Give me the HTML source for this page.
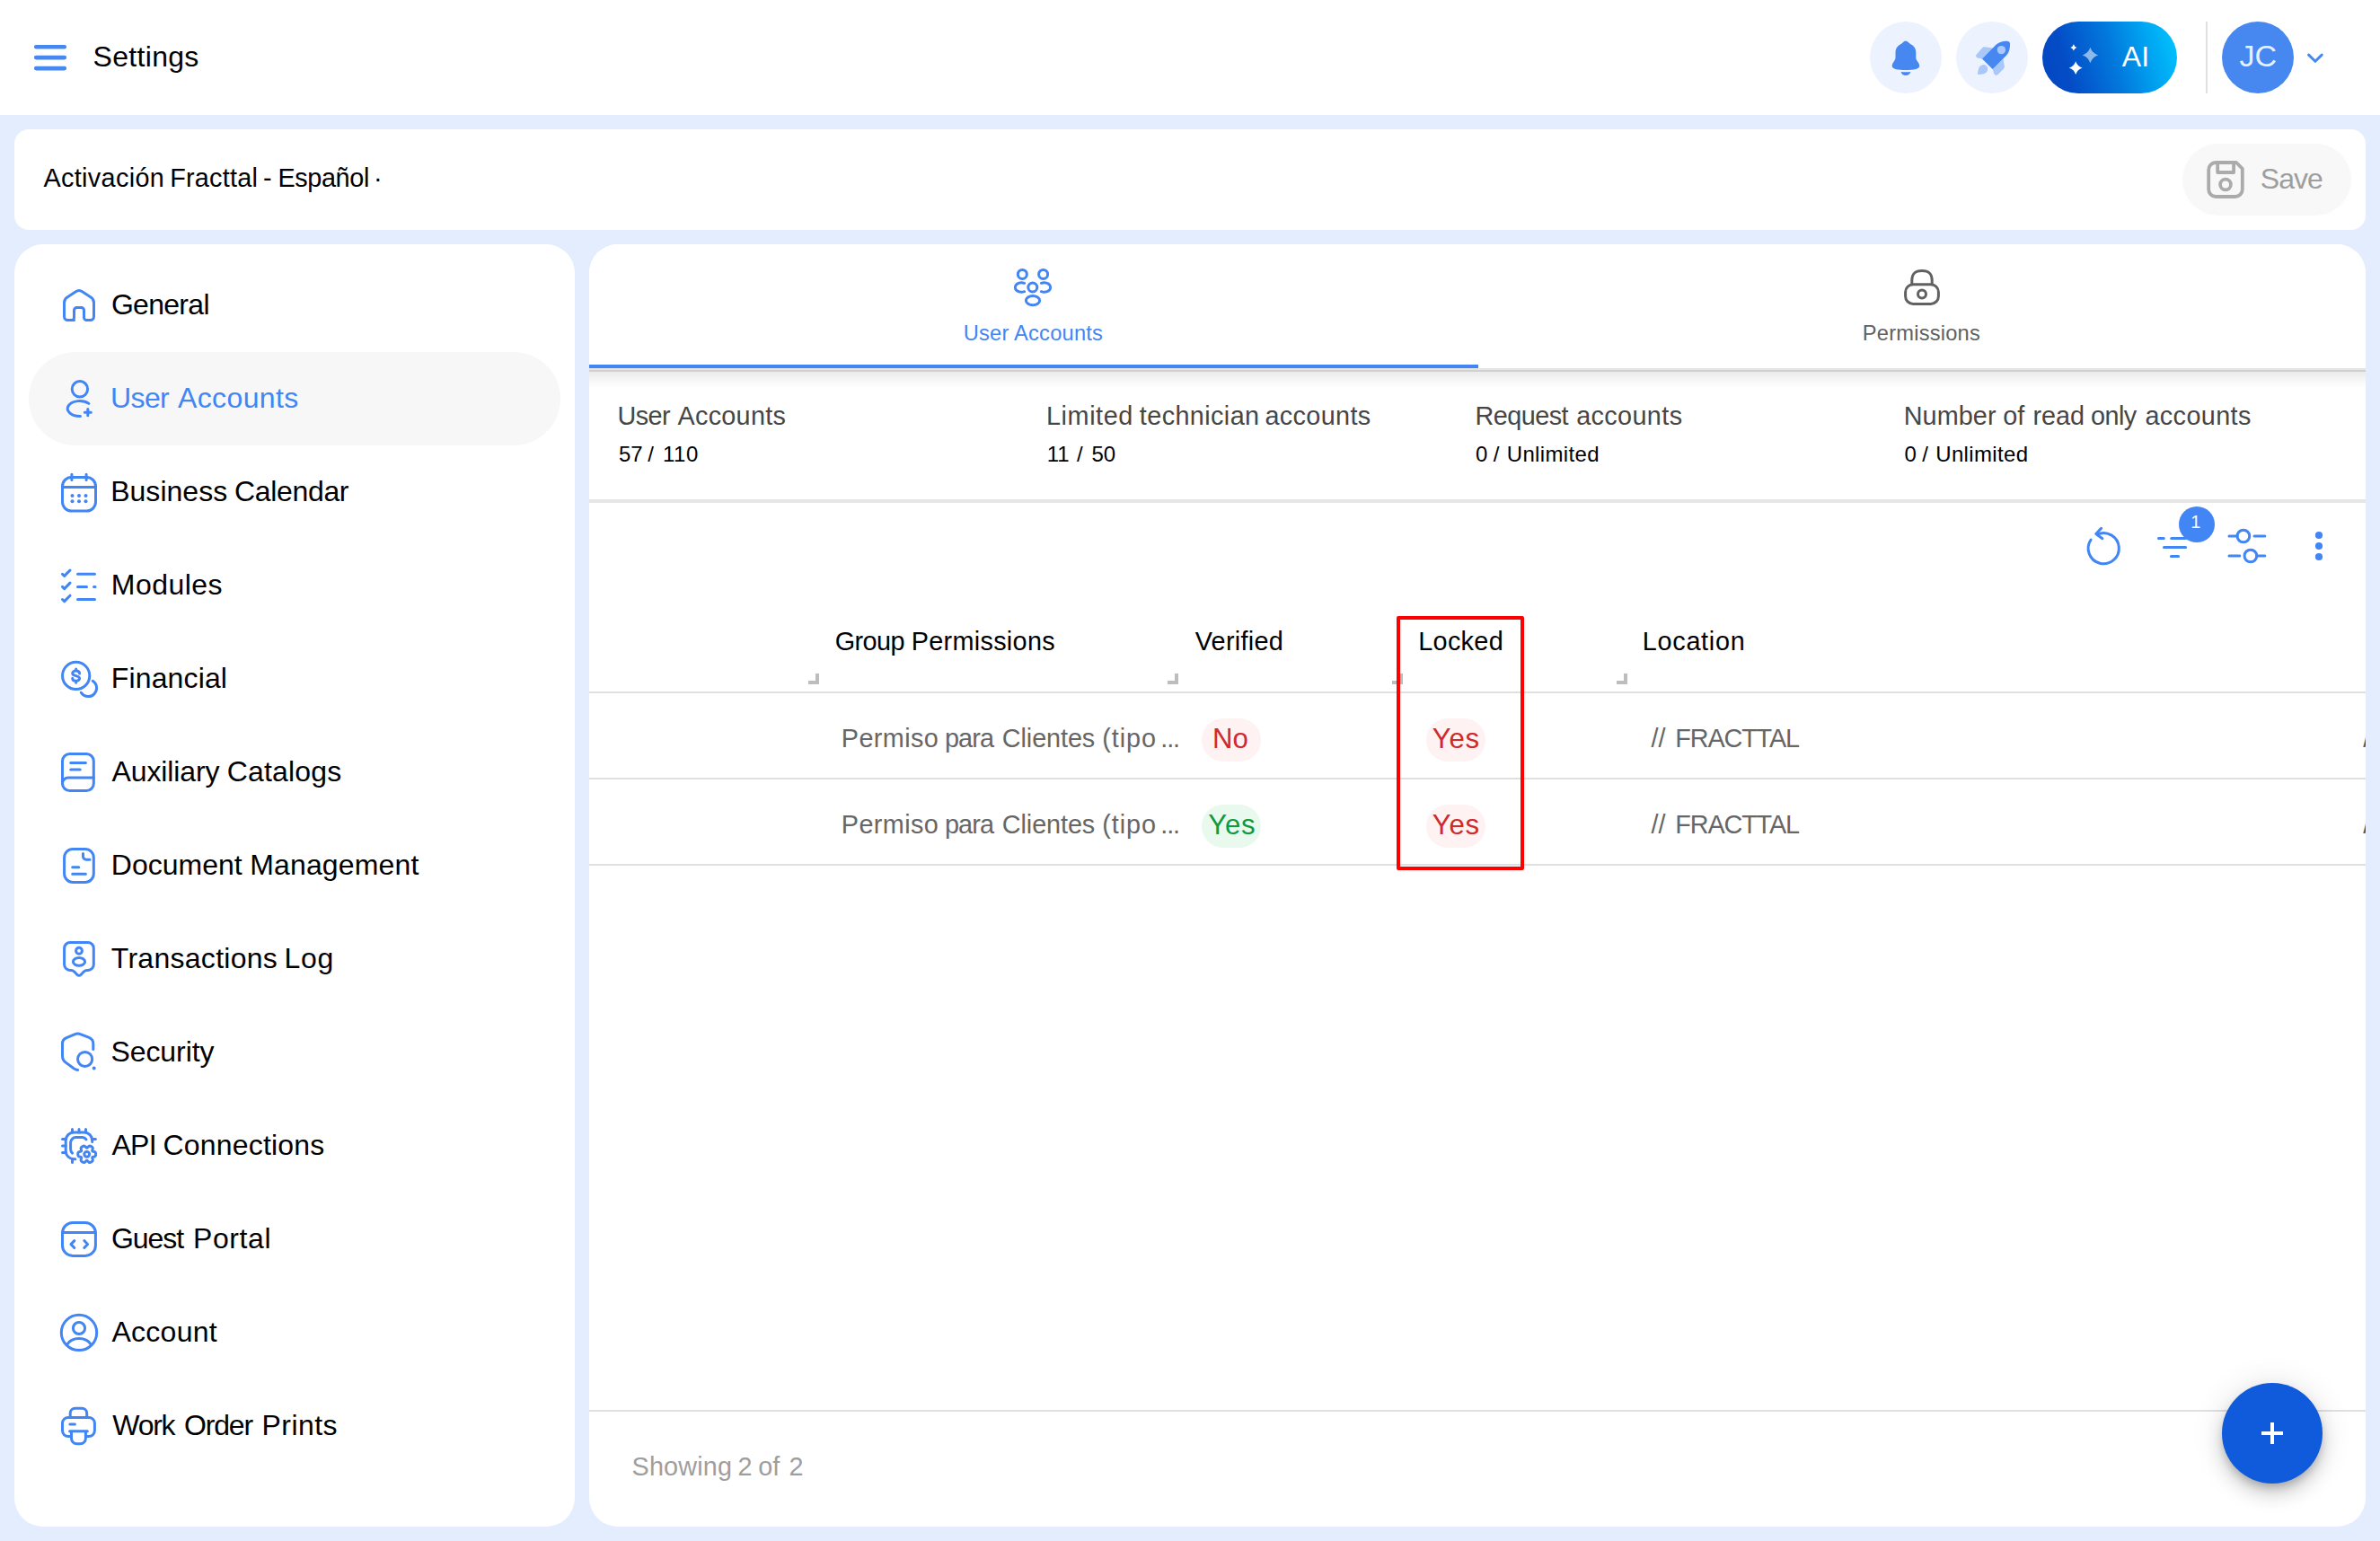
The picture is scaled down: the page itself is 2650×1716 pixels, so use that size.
<!DOCTYPE html>
<html lang="en"><head><meta charset="utf-8"><title>Settings - User Accounts</title>
<style>
*{box-sizing:border-box;margin:0;padding:0}
html,body{width:2650px;height:1716px;overflow:hidden}
body{position:relative;background:#E3EDFD;font-family:"Liberation Sans",sans-serif;-webkit-font-smoothing:antialiased}
.abs{position:absolute}
.t{position:absolute;white-space:pre;line-height:1;font-family:"Liberation Sans",sans-serif}
.w{position:absolute;top:0;white-space:pre}
.hdr{position:absolute;left:0;top:0;width:2650px;height:128px;background:#fff}
.card{position:absolute;background:#fff}
.topcard{left:16px;top:144px;width:2618px;height:112px;border-radius:16px}
.side{left:16px;top:272px;width:624px;height:1428px;border-radius:32px}
.main{left:656px;top:272px;width:1978px;height:1428px;border-radius:32px;overflow:hidden}
.sel{position:absolute;left:32px;top:392px;width:592px;height:104px;border-radius:52px;background:#F7F7F7}
.circ{position:absolute;top:24px;width:80px;height:80px;border-radius:50%;background:#ECF3FE}
.ai{position:absolute;left:2274px;top:24px;width:150px;height:80px;border-radius:40px;background:linear-gradient(74deg,#0346C2 0%,#044CC6 20%,#0278DC 52%,#00A6F2 78%,#00C8FF 100%)}
.vdiv{position:absolute;left:2456px;top:24px;width:2px;height:80px;background:#E0E0E0}
.avatar{position:absolute;left:2474px;top:24px;width:80px;height:80px;border-radius:50%;background:#4787F0}
.save{position:absolute;left:2430px;top:160px;width:188px;height:80px;border-radius:40px;background:#F8F8F8}
.ico{position:absolute;width:48px;height:48px;fill:none;stroke:#4285F4;stroke-width:3;stroke-linecap:round;stroke-linejoin:round;overflow:visible}
.tabs{position:absolute;left:0;top:0;width:1978px;height:138px;background:#fff;}
.tabline{position:absolute;left:0;top:134px;width:990px;height:4px;background:#4285F4}
.hline{position:absolute;left:656px;width:1978px;background:#E6E6E6}
.pill{position:absolute;width:66px;height:48px;border-radius:24px}
.pr{background:#FEF2F2}.pg{background:#E9F9EE}
.rz{position:absolute;width:12px;height:12px;border-right:4px solid #BDBDBD;border-bottom:4px solid #BDBDBD}
.redbox{position:absolute;left:1555px;top:686px;width:142px;height:283px;border:4px solid #FF0000;border-radius:2px}
.fab{position:absolute;left:2474px;top:1540px;width:112px;height:112px;border-radius:50%;background:#0F5BDB;box-shadow:0 6px 10px -2px rgba(0,0,0,.2),0 12px 20px 0 rgba(0,0,0,.14),0 2px 36px 0 rgba(0,0,0,.12)}
.badge{position:absolute;left:2426px;top:564px;width:40px;height:40px;border-radius:50%;background:#4285F4}

.tsh1{position:absolute;left:656px;top:410px;width:1978px;height:2px;background:#E5E5E5}
.tsh2{position:absolute;left:656px;top:412px;width:1978px;height:2px;background:#D0D0D0}
.tsh3{position:absolute;left:656px;top:414px;width:1978px;height:19px;background:linear-gradient(#EBEBEB 0%,#EEE 18%,#F3F3F3 36%,#F8F8F8 56%,#FCFCFC 80%,#FFF 100%)}

</style></head>
<body>
<header>
<div class="hdr"></div>
<svg class="abs" style="left:34px;top:44px" width="44" height="40" viewBox="34 44 44 40"><path d="M40.2 52.2H71.8M40.2 64.1H71.8M40.2 76.1H71.8" stroke="#4787F0" stroke-width="4.6" stroke-linecap="round"/></svg>
<div class="circ" style="left:2082px"></div>
<div class="circ" style="left:2178px"></div>
<div class="ai"></div>
<div class="vdiv"></div>
<div class="avatar"></div>
<svg class="abs" style="left:2082px;top:24px" width="80" height="80" viewBox="0 0 80 80" fill="#4787F0">
<path d="M39.9 21.7C38.5 21.7 37.6 22.4 36.6 23.4C35.5 24.5 33.8 25.3 32.5 26.3C29.8 28.4 28.5 31 28.5 34.5V40C28.5 42 27.6 43.3 26.4 45C25.3 46.6 24.7 47.7 24.7 49.3C24.7 51.3 26 52.3 28.5 52.9C32 53.7 36 53.9 39.9 53.9C43.8 53.9 47.8 53.7 51.3 52.9C53.8 52.3 55.2 51.3 55.2 49.3C55.2 47.7 54.5 46.6 53.4 45C52.2 43.3 51.3 42 51.3 40V34.5C51.3 31 50 28.4 47.3 26.3C46 25.3 44.3 24.5 43.2 23.4C42.2 22.4 41.3 21.7 39.9 21.7Z"/>
<path d="M34.6 55.9C36.2 56.2 38 56.3 39.9 56.3S43.6 56.2 45.4 55.9C44.6 58.3 42.6 59.9 39.9 59.9S35.3 58.3 34.6 55.9Z"/></svg>
<svg class="abs" style="left:2178px;top:24px" width="80" height="80" viewBox="0 0 80 80" fill="#4787F0">
<g opacity=".4"><path d="M31.5 28.2L41 29.6L29 41.4L24 40.4C22 40 21.6 38 22.8 36.6L29.2 29.3C29.9 28.5 30.6 28.1 31.5 28.2Z"/>
<path d="M52.4 41.5L53.9 50C54 51 53.7 51.6 53 52.4L46.5 58.9C45 60.2 43 59.8 42.2 58L40.7 53.1Z"/>
<path d="M30.5 47.9C33.3 47.9 35.2 50.2 35.2 52.8C35.2 56 33 58 29.5 58.5L25 59C24.2 59 23.9 58.6 24 57.8L24.8 53.5C25.5 50 27.6 47.9 30.5 47.9Z"/></g>
<path d="M29 41.4L44.5 25.8C48 22.6 53 21.6 57.5 21.9C59 22 59.9 22.9 60 24.4C60.3 29 59.3 34 56.2 37.5L40.7 53.1Z"/>
<circle cx="50.4" cy="31.6" r="4.7" fill="#AAC8F9"/></svg>
<svg class="abs" style="left:2274px;top:24px" width="150" height="80" viewBox="2274 24 150 80"><path fill="#fff" d="M2308.9 49.3Q2309.69 52.11 2312.5 52.9Q2309.69 53.69 2308.9 56.5Q2308.11 53.69 2305.3 52.9Q2308.11 52.11 2308.9 49.3Z"/><path fill="#fff" fill-opacity=".55" d="M2327.4 52.8Q2329.58 59.33 2336.1 61.5Q2329.58 63.67 2327.4 70.2Q2325.22 63.67 2318.7000000000003 61.5Q2325.22 59.33 2327.4 52.8Z"/><path fill="#fff" d="M2311.2 68.19999999999999Q2313.05 73.75 2318.6 75.6Q2313.05 77.45 2311.2 83.0Q2309.35 77.45 2303.7999999999997 75.6Q2309.35 73.75 2311.2 68.19999999999999Z"/></svg>
<svg class="abs" style="left:2560px;top:50px" width="36" height="30" viewBox="2560 50 36 30"><path d="M2570.6 61.1L2577.9 68.3L2585.2 61.1" fill="none" stroke="#4787F0" stroke-width="3" stroke-linecap="round" stroke-linejoin="round"/></svg>
<span class="t" style="left:103.55px;top:46.71px;font-size:32px;color:#000;letter-spacing:0.312px">Settings</span>
<span class="t" style="left:2362.84px;top:46.71px;font-size:32px;color:#fff;letter-spacing:0.000px">AI</span>
<span class="t" style="left:2493.47px;top:45.42px;font-size:34px;color:#E8F0FE;letter-spacing:0.000px">JC</span>
</header>
<section>
<div class="card topcard"></div>
<div class="save"></div>
<svg class="abs" style="left:2454px;top:176px" width="48" height="48" viewBox="0 0 48 48" fill="none" stroke="#ABABAB" stroke-width="3.8" stroke-linejoin="round"><path d="M13.2 5H36L42.8 11.8V35A8 8 0 0 1 34.8 43H13.2A8 8 0 0 1 5.2 35V13A8 8 0 0 1 13.2 5Z"/><path d="M15.2 5V16H33.1V5"/><circle cx="24" cy="29.5" r="5.9"/></svg>
<span class="t" style="left:0;top:183.52px;font-size:28.8px;color:#000;"><span class="w" style="left:48.44px;letter-spacing:0.341px">Activación</span> <span class="w" style="left:189.14px;letter-spacing:0.253px">Fracttal</span> <span class="w" style="left:292.92px;letter-spacing:0.000px">-</span> <span class="w" style="left:309.44px;letter-spacing:-0.365px">Español</span> <span class="w" style="left:415.88px;letter-spacing:0.000px">·</span></span>
<span class="t" style="left:2516.75px;top:183.01px;font-size:32px;color:#9e9e9e;letter-spacing:-0.954px">Save</span>
</section>
<nav>
<div class="card side"></div>
<div class="sel"></div>
<svg class="ico" style="left:64px;top:316px" viewBox="0 0 48 48"><path transform="scale(2)" stroke-width="1.5" d="M9.25 20.25H5.75a2 2 0 0 1-2-2V10.6c0-1.2.56-2.3 1.5-3.03L10.2 4.4a3 3 0 0 1 3.6 0l4.95 3.17c.94.73 1.5 1.83 1.5 3.03v7.65a2 2 0 0 1-2 2h-2a1.5 1.5 0 0 1-1.5-1.5v-4a1.5 1.5 0 0 0-1.5-1.5h-2.5a1.5 1.5 0 0 0-1.5 1.5v4a1.5 1.5 0 0 1-1.5 1.5z"/></svg>
<svg class="ico" style="left:64px;top:420px" viewBox="0 0 48 48"><circle cx="24.9" cy="13.3" r="8.7"/><path d="M34.9 29.4A13.5 8.5 0 1 0 25.4 43.5"/><path d="M30.3 39.2H37.3M33.8 35.6V42.8"/></svg>
<svg class="ico" style="left:64px;top:524px" viewBox="0 0 48 48"><rect x="5.5" y="7.4" width="37" height="37.7" rx="10" ry="10"/><path d="M15.9 4.3V10.4M32.1 4.3V10.4M5.5 18.6H42.5"/><g fill="#4285F4" stroke="none"><circle cx="16.5" cy="27.9" r="2"/><circle cx="24" cy="27.9" r="2"/><circle cx="31.5" cy="27.9" r="2"/><circle cx="16.5" cy="34.2" r="2"/><circle cx="24" cy="34.2" r="2"/><circle cx="31.5" cy="34.2" r="2"/></g></svg>
<svg class="ico" style="left:64px;top:628px" viewBox="0 0 48 48"><path d="M5.5 11.3L7.7 13.4L14 7M5.5 25.4L7.7 27.6L14 21.1M5.5 39.5L7.7 41.6L14 35.2M22.5 11.3H41.5M22.5 25.4H32.5M40.5 25.4H42M22.5 39.5H41.5"/></svg>
<svg class="ico" style="left:64px;top:732px" viewBox="0 0 48 48"><circle cx="20.65" cy="20.45" r="15.1"/><path d="M39.3 26.3A9.4 9.4 0 1 1 26.3 39.3"/><path d="M24.6 18C24.6 16 22.8 14.9 20.65 14.9S16.7 16 16.7 17.7C16.7 19.6 18.6 20.1 20.65 20.6S24.6 21.8 24.6 23.5C24.6 25.2 22.8 26.3 20.65 26.3S16.7 25.2 16.7 23.2M20.65 12.9V14.9M20.65 26.3V28.2"/></svg>
<svg class="ico" style="left:64px;top:836px" viewBox="0 0 48 48"><rect x="5.5" y="3.5" width="34.8" height="41" rx="8" ry="8"/><path d="M14.7 13.6H31.4M14.7 21.1H25.2M40.3 30H12A6.5 6.5 0 0 0 5.5 36.5"/></svg>
<svg class="ico" style="left:64px;top:940px" viewBox="0 0 48 48"><rect x="7.6" y="5.5" width="32.7" height="36.9" rx="9.5" ry="9.5"/><path d="M28.5 10.5V13.8A3.5 3.5 0 0 0 32 17.3H36M16.7 25.85H23.7M16.7 33.3H31.4"/></svg>
<svg class="ico" style="left:64px;top:1044px" viewBox="0 0 48 48"><path d="M14 5.5H33.9A6.4 6.4 0 0 1 40.3 11.9V30A6.4 6.4 0 0 1 33.9 36.4H33C31.5 36.4 30.3 37 29.3 38L26 41.5A2.8 2.8 0 0 1 22 41.5L18.7 38C17.7 37 16.5 36.4 15 36.4H14A6.4 6.4 0 0 1 7.6 30V11.9A6.4 6.4 0 0 1 14 5.5Z"/><circle cx="24" cy="14.76" r="3.4"/><ellipse cx="24" cy="26.9" rx="6.6" ry="4.4"/></svg>
<svg class="ico" style="left:64px;top:1148px" viewBox="0 0 48 48"><path d="M39.8 20.6V14C39.8 11 38 8.6 35.2 7.4L26.2 3.8A9 9 0 0 0 19 3.8L10 7.6C7.2 8.8 5.5 11.2 5.5 14V28C5.5 31 7 33.6 9.5 35.4L17.5 41.3C19 42.5 20.8 43.3 22.7 43.4"/><circle cx="30.6" cy="31.45" r="8.05"/><circle cx="40.7" cy="41.5" r="2" fill="#4285F4" stroke="none"/></svg>
<svg class="ico" style="left:64px;top:1252px" viewBox="0 0 48 48"><path d="M38.7 19.6V18A9 9 0 0 0 29.7 9H18.2A9 9 0 0 0 9.2 18V29.7A9 9 0 0 0 18.2 38.7H19.8"/><path d="M32 16.8C31 15.4 29.6 14.6 27.8 14.6H20.5A5.9 5.9 0 0 0 14.6 20.5V27.5C14.6 29.4 15.3 31 16.5 32.1"/><path d="M16.5 5.5V9M24 5.5V9M31.5 5.5V9M5.5 16.5H9.2M5.5 24H9.2M5.5 31.5H9.2M38.7 16.5H42.4M16.5 38.7V42.4"/><path d="M42.6 33.3L42.6 33.9L42.5 34.6L42.2 35.2L41.7 35.7L40.9 36.1L40.0 36.3L39.2 36.5L38.8 36.8L38.7 37.3L38.9 38.1L39.2 39.0L39.3 39.9L39.1 40.6L38.7 41.1L38.2 41.5L37.7 41.9L37.1 42.2L36.5 42.4L35.8 42.5L35.1 42.3L34.4 41.7L33.7 41.1L33.2 40.5L32.7 40.3L32.2 40.5L31.7 41.1L31.0 41.7L30.3 42.3L29.6 42.5L28.9 42.4L28.3 42.2L27.8 41.9L27.2 41.5L26.7 41.1L26.3 40.6L26.1 39.9L26.2 39.0L26.5 38.1L26.7 37.3L26.6 36.8L26.2 36.5L25.4 36.3L24.5 36.1L23.7 35.7L23.2 35.2L22.9 34.6L22.8 33.9L22.8 33.3L22.8 32.7L22.9 32.0L23.2 31.4L23.7 30.9L24.5 30.5L25.4 30.3L26.2 30.1L26.6 29.8L26.7 29.3L26.5 28.5L26.2 27.6L26.1 26.7L26.3 26.0L26.7 25.5L27.2 25.1L27.8 24.7L28.3 24.4L28.9 24.2L29.6 24.1L30.3 24.3L31.0 24.9L31.7 25.5L32.2 26.1L32.7 26.3L33.2 26.1L33.7 25.5L34.4 24.9L35.1 24.3L35.8 24.1L36.5 24.2L37.1 24.4L37.7 24.7L38.2 25.1L38.7 25.5L39.1 26.0L39.3 26.7L39.2 27.6L38.9 28.5L38.7 29.3L38.8 29.8L39.2 30.1L40.0 30.3L40.9 30.5L41.7 30.9L42.2 31.4L42.5 32.0L42.6 32.7Z"/><circle cx="32.7" cy="33.3" r="2.9"/></svg>
<svg class="ico" style="left:64px;top:1356px" viewBox="0 0 48 48"><rect x="5.5" y="5.5" width="36.9" height="36.9" rx="11.5" ry="11.5"/><path d="M5.5 16.5H42.4M18.8 25.6L15 29.6L18.8 33.5M29.8 25.6L33.5 29.6L29.8 33.5"/></svg>
<svg class="ico" style="left:64px;top:1460px" viewBox="0 0 48 48"><circle cx="24" cy="23.9" r="19.7"/><circle cx="24" cy="19" r="6.6"/><path d="M10.9 37C13.5 33 18.5 30.6 24 30.6S34.5 33 37.1 37"/></svg>
<svg class="ico" style="left:64px;top:1564px" viewBox="0 0 48 48"><path d="M14.2 14.4V9.8A5.5 5.5 0 0 1 19.7 4.3H27.2A5.5 5.5 0 0 1 32.7 9.8V14.4"/><path d="M14.2 35.6H12A6.5 6.5 0 0 1 5.5 29.1V20.9A6.5 6.5 0 0 1 12 14.4H34.9A6.5 6.5 0 0 1 41.4 20.9V29.1A6.5 6.5 0 0 1 34.9 35.6H32.7"/><path d="M13.85 21.9H19.4M13.6 29.8H33.3M15.5 29.8V37.7A6 6 0 0 0 21.5 43.7H25.4A6 6 0 0 0 31.4 37.7V29.8"/></svg>
<span class="t" style="left:123.89px;top:322.91px;font-size:32px;color:#000;letter-spacing:-0.699px">General</span>
<span class="t" style="left:0;top:426.91px;font-size:32px;color:#4285F4;"><span class="w" style="left:123.03px;letter-spacing:-0.621px">User</span> <span class="w" style="left:197.94px;letter-spacing:0.399px">Accounts</span></span>
<span class="t" style="left:0;top:530.91px;font-size:32px;color:#000;"><span class="w" style="left:123.17px;letter-spacing:0.034px">Business</span> <span class="w" style="left:260.98px;letter-spacing:-0.329px">Calendar</span></span>
<span class="t" style="left:123.78px;top:634.91px;font-size:32px;color:#000;letter-spacing:0.455px">Modules</span>
<span class="t" style="left:123.78px;top:738.91px;font-size:32px;color:#000;letter-spacing:0.138px">Financial</span>
<span class="t" style="left:0;top:842.91px;font-size:32px;color:#000;"><span class="w" style="left:124.44px;letter-spacing:-0.100px">Auxiliary</span> <span class="w" style="left:252.78px;letter-spacing:0.155px">Catalogs</span></span>
<span class="t" style="left:0;top:946.91px;font-size:32px;color:#000;"><span class="w" style="left:123.78px;letter-spacing:0.002px">Document</span> <span class="w" style="left:278.18px;letter-spacing:0.164px">Management</span></span>
<span class="t" style="left:0;top:1050.91px;font-size:32px;color:#000;"><span class="w" style="left:123.78px;letter-spacing:0.280px">Transactions</span> <span class="w" style="left:316.48px;letter-spacing:0.748px">Log</span></span>
<span class="t" style="left:123.45px;top:1154.91px;font-size:32px;color:#000;letter-spacing:-0.068px">Security</span>
<span class="t" style="left:0;top:1258.91px;font-size:32px;color:#000;"><span class="w" style="left:124.44px;letter-spacing:-0.681px">API</span> <span class="w" style="left:181.57px;letter-spacing:0.189px">Connections</span></span>
<span class="t" style="left:0;top:1362.91px;font-size:32px;color:#000;"><span class="w" style="left:123.89px;letter-spacing:-1.008px">Guest</span> <span class="w" style="left:214.97px;letter-spacing:0.614px">Portal</span></span>
<span class="t" style="left:124.44px;top:1466.91px;font-size:32px;color:#000;letter-spacing:0.262px">Account</span>
<span class="t" style="left:0;top:1570.91px;font-size:32px;color:#000;"><span class="w" style="left:125.36px;letter-spacing:-1.328px">Work</span> <span class="w" style="left:205.08px;letter-spacing:-1.187px">Order</span> <span class="w" style="left:291.57px;letter-spacing:0.437px">Prints</span></span>
</nav>
<main>
<div class="card main"><div class="tabs"><div class="tabline"></div></div></div>
<div class="tsh1"></div><div class="tsh2"></div><div class="tsh3"></div>
<svg class="ico" style="left:1126px;top:296px" viewBox="0 0 48 48"><circle cx="12.35" cy="9.44" r="5"/><circle cx="35.6" cy="9.44" r="5"/><circle cx="23.8" cy="24" r="5"/><ellipse cx="24" cy="38.7" rx="7.6" ry="5.1"/><path d="M14.6 19.3C13.7 19 12.5 18.7 11.3 18.7C7.4 18.7 4.3 21 4.3 24S7.4 29.3 11.3 29.3C12.5 29.3 13.7 29 14.6 28.7M33.4 19.3C34.3 19 35.5 18.7 36.7 18.7C40.6 18.7 43.7 21 43.7 24S40.6 29.3 36.7 29.3C35.5 29.3 34.3 29 33.4 28.7"/></svg>
<svg class="ico" style="left:2116px;top:296px;stroke:#616161" viewBox="0 0 48 48"><rect x="5.6" y="20.7" width="36.8" height="21.7" rx="8.5" ry="8.5"/><path d="M12.8 20.7V16.5C12.8 9 16 5.4 24 5.4S35.2 9 35.2 16.5V20.7"/><circle cx="24" cy="31.45" r="4.5"/></svg>
<svg class="abs" style="left:2310px;top:570px" width="300" height="70" viewBox="2310 570 300 70" fill="none" stroke="#4285F4" stroke-width="3" stroke-linecap="round" stroke-linejoin="round">
<path d="M2335.07 595.1A17.1 17.1 0 1 1 2328.1 601"/><path d="M2339.6 588.3L2333.8 594.6L2340.9 599.7"/>
<path d="M2403.5 599.5H2409.3M2417.7 599.5H2433.5M2409.5 609.6H2433.6M2417.4 619.6H2425.6"/>
<circle cx="2497.9" cy="597" r="6.85"/><circle cx="2505.9" cy="619" r="6.85"/>
<path d="M2482 597H2491M2510 597H2521.8M2482 619H2493.8M2513 619H2521.8"/>
<g fill="#4285F4" stroke="none"><circle cx="2582" cy="596" r="4.1"/><circle cx="2582" cy="608" r="4.1"/><circle cx="2582" cy="620" r="4.1"/></g></svg>
<div class="hline" style="top:556px;height:4px"></div>
<div class="hline" style="top:770px;height:2px;background:#E0E0E0"></div>
<div class="hline" style="top:866px;height:2px;background:#E0E0E0"></div>
<div class="hline" style="top:962px;height:2px;background:#E0E0E0"></div>
<div class="hline" style="top:1570px;height:2px;background:#E0E0E0"></div>
<div class="rz" style="left:900px;top:750px"></div>
<div class="rz" style="left:1300px;top:750px"></div>
<div class="rz" style="left:1550px;top:750px"></div>
<div class="rz" style="left:1800px;top:750px"></div>
<div class="pill pr" style="left:1338px;top:800px"></div>
<div class="pill pg" style="left:1338px;top:896px"></div>
<div class="pill pr" style="left:1588px;top:800px"></div>
<div class="pill pr" style="left:1588px;top:896px"></div>
<div class="redbox"></div>
<div class="abs" style="left:2600px;top:780px;width:34px;height:180px;overflow:hidden"><span class="t" style="left:31.2px;top:27.9px;font-size:28.8px;color:#555">/</span><span class="t" style="left:31.2px;top:123.9px;font-size:28.8px;color:#555">/</span></div>
<div class="badge"></div>
<div class="fab"></div>
<svg class="abs" style="left:2518px;top:1584px" width="24" height="24" viewBox="0 0 24 24"><path d="M0 12H24M12 0V24" stroke="#fff" stroke-width="4"/></svg>
<span class="t" style="left:1072.77px;top:359.94px;font-size:23.7px;color:#4285F4;letter-spacing:0.199px">User Accounts</span>
<span class="t" style="left:2073.76px;top:359.94px;font-size:23.7px;color:#616161;letter-spacing:0.204px">Permissions</span>
<span class="t" style="left:0;top:449.32px;font-size:28.8px;color:#464646;"><span class="w" style="left:687.58px;letter-spacing:-0.635px">User</span> <span class="w" style="left:754.54px;letter-spacing:0.262px">Accounts</span></span>
<span class="t" style="left:0;top:493.68px;font-size:24px;color:#000;"><span class="w" style="left:688.94px;letter-spacing:0.000px">57</span> <span class="w" style="left:721.30px;letter-spacing:0.000px">/</span> <span class="w" style="left:737.97px;letter-spacing:0.502px">110</span></span>
<span class="t" style="left:0;top:449.32px;font-size:28.8px;color:#464646;"><span class="w" style="left:1164.94px;letter-spacing:0.596px">Limited</span> <span class="w" style="left:1268.86px;letter-spacing:0.391px">technician</span> <span class="w" style="left:1408.48px;letter-spacing:0.342px">accounts</span></span>
<span class="t" style="left:0;top:493.68px;font-size:24px;color:#000;"><span class="w" style="left:1165.77px;letter-spacing:0.000px">11</span> <span class="w" style="left:1199.00px;letter-spacing:0.000px">/</span> <span class="w" style="left:1215.44px;letter-spacing:0.000px">50</span></span>
<span class="t" style="left:0;top:449.32px;font-size:28.8px;color:#464646;"><span class="w" style="left:1642.44px;letter-spacing:-0.533px">Request</span> <span class="w" style="left:1755.18px;letter-spacing:0.371px">accounts</span></span>
<span class="t" style="left:0;top:493.68px;font-size:24px;color:#000;"><span class="w" style="left:1643.06px;letter-spacing:0.000px">0</span> <span class="w" style="left:1662.80px;letter-spacing:0.000px">/</span> <span class="w" style="left:1677.75px;letter-spacing:0.346px">Unlimited</span></span>
<span class="t" style="left:0;top:449.32px;font-size:28.8px;color:#464646;"><span class="w" style="left:2119.64px;letter-spacing:0.102px">Number</span> <span class="w" style="left:2230.19px;letter-spacing:0.000px">of</span> <span class="w" style="left:2263.39px;letter-spacing:-0.024px">read</span> <span class="w" style="left:2328.09px;letter-spacing:-0.589px">only</span> <span class="w" style="left:2388.48px;letter-spacing:0.371px">accounts</span></span>
<span class="t" style="left:0;top:493.68px;font-size:24px;color:#000;"><span class="w" style="left:2120.56px;letter-spacing:0.000px">0</span> <span class="w" style="left:2140.30px;letter-spacing:0.000px">/</span> <span class="w" style="left:2155.25px;letter-spacing:0.346px">Unlimited</span></span>
<span class="t" style="left:0;top:699.72px;font-size:28.8px;color:#000;"><span class="w" style="left:929.65px;letter-spacing:-0.571px">Group</span> <span class="w" style="left:1014.74px;letter-spacing:0.306px">Permissions</span></span>
<span class="t" style="left:1330.67px;top:699.72px;font-size:28.8px;color:#000;letter-spacing:0.303px">Verified</span>
<span class="t" style="left:1579.24px;top:699.72px;font-size:28.8px;color:#000;letter-spacing:0.310px">Locked</span>
<span class="t" style="left:1828.84px;top:699.72px;font-size:28.8px;color:#000;letter-spacing:0.707px">Location</span>
<span class="t" style="left:0;top:807.92px;font-size:28.8px;color:#666;"><span class="w" style="left:936.84px;letter-spacing:0.408px">Permiso</span> <span class="w" style="left:1051.94px;letter-spacing:-0.862px">para</span> <span class="w" style="left:1115.84px;letter-spacing:-0.092px">Clientes</span> <span class="w" style="left:1227.21px;letter-spacing:0.918px">(tipo</span> <span class="w" style="left:1292.37px;letter-spacing:-1.223px">...</span></span>
<span class="t" style="left:0;top:808.12px;font-size:28.8px;color:#666;"><span class="w" style="left:1838.40px;letter-spacing:0.000px">//</span> <span class="w" style="left:1865.24px;letter-spacing:-1.122px">FRACTTAL</span></span>
<span class="t" style="left:0;top:903.92px;font-size:28.8px;color:#666;"><span class="w" style="left:936.84px;letter-spacing:0.408px">Permiso</span> <span class="w" style="left:1051.94px;letter-spacing:-0.862px">para</span> <span class="w" style="left:1115.84px;letter-spacing:-0.092px">Clientes</span> <span class="w" style="left:1227.21px;letter-spacing:0.918px">(tipo</span> <span class="w" style="left:1292.37px;letter-spacing:-1.223px">...</span></span>
<span class="t" style="left:0;top:904.12px;font-size:28.8px;color:#666;"><span class="w" style="left:1838.40px;letter-spacing:0.000px">//</span> <span class="w" style="left:1865.24px;letter-spacing:-1.122px">FRACTTAL</span></span>
<span class="t" style="left:1349.94px;top:807.29px;font-size:31.2px;color:#D02A2A;letter-spacing:0.000px">No</span>
<span class="t" style="left:1345.31px;top:903.49px;font-size:31.2px;color:#0F9B3C;letter-spacing:0.707px">Yes</span>
<span class="t" style="left:1594.81px;top:807.29px;font-size:31.2px;color:#D02A2A;letter-spacing:0.707px">Yes</span>
<span class="t" style="left:1594.81px;top:903.29px;font-size:31.2px;color:#D02A2A;letter-spacing:0.707px">Yes</span>
<span class="t" style="left:0;top:1619.42px;font-size:28.8px;color:#9e9e9e;"><span class="w" style="left:703.59px;letter-spacing:0.148px">Showing</span> <span class="w" style="left:821.45px;letter-spacing:0.000px">2</span> <span class="w" style="left:844.29px;letter-spacing:0.000px">of</span> <span class="w" style="left:878.55px;letter-spacing:0.000px">2</span></span>
<span class="t" style="left:2439.28px;top:571.07px;font-size:20px;color:#fff;letter-spacing:0.000px">1</span>
</main>
</body></html>
